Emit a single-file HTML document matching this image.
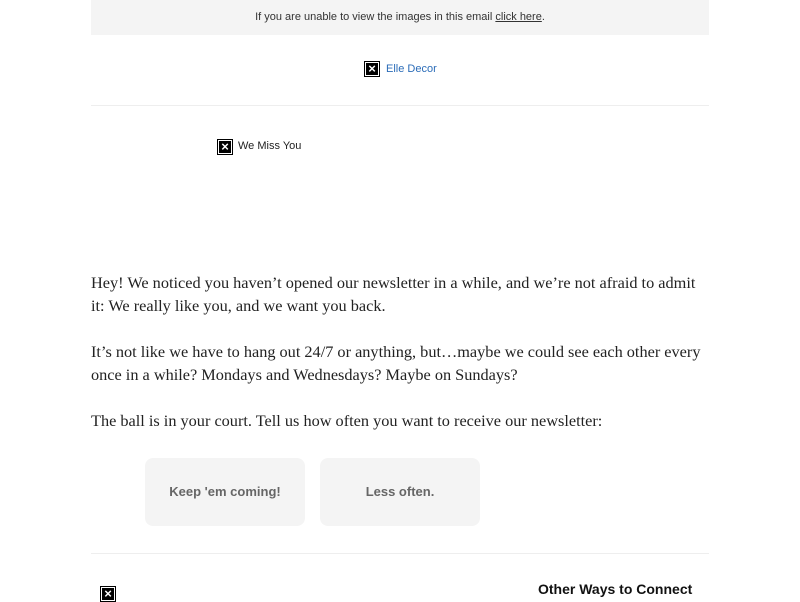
<!DOCTYPE html>
<html><head><meta charset="utf-8"><style>
body{margin:0;width:800px;height:600px;background:#fff;position:relative;overflow:hidden;font-family:"Liberation Sans",Arial,sans-serif}
.a{position:absolute}
.ic{position:absolute;width:12px;height:12px;border:1px solid #000;background:#fff;padding:1px}
.ic div{width:12px;height:12px;background:#000;color:#fff;font:bold 13px/12px "Liberation Sans",sans-serif;text-align:center}
.p{position:absolute;left:91px;font-family:"Liberation Serif",Georgia,serif;font-size:16.3px;line-height:23px;color:#222;white-space:nowrap}
.btn{position:absolute;top:458px;width:160px;height:68px;background:#f4f4f4;border-radius:8px;text-align:center;line-height:68px;font-weight:bold;font-size:13px;color:#666}
</style></head><body>
<div class="a" style="left:91px;top:0;width:618px;height:35px;background:#f4f4f4;text-align:center;font-size:11px;line-height:34px;color:#333">If you are unable to view the images in this email <u>click here</u>.</div>
<div class="ic" style="left:364px;top:61px"><div>×</div></div>
<div class="a" style="left:386px;top:63px;font-size:11px;color:#2b6cb8">Elle Decor</div>
<div class="a" style="left:91px;top:105px;width:618px;height:1px;background:#eee"></div>
<div class="ic" style="left:217px;top:139px"><div>×</div></div>
<div class="a" style="left:238px;top:140px;font-size:11px;color:#222">We Miss You</div>
<div class="p" style="top:271px">Hey! We noticed you haven’t opened our newsletter in a while, and we’re not afraid to admit<br>it: We really like you, and we want you back.</div>
<div class="p" style="top:340px">It’s not like we have to hang out 24/7 or anything, but…maybe we could see each other every<br>once in a while? Mondays and Wednesdays? Maybe on Sundays?</div>
<div class="p" style="top:409px">The ball is in your court. Tell us how often you want to receive our newsletter:</div>
<div class="btn" style="left:145px">Keep 'em coming!</div>
<div class="btn" style="left:320px">Less often.</div>
<div class="a" style="left:91px;top:553px;width:618px;height:1px;background:#eee"></div>
<div class="ic" style="left:100px;top:586px"><div>×</div></div>
<div class="a" style="left:538px;top:581px;font-size:14px;font-weight:bold;color:#111">Other Ways to Connect</div>
</body></html>
